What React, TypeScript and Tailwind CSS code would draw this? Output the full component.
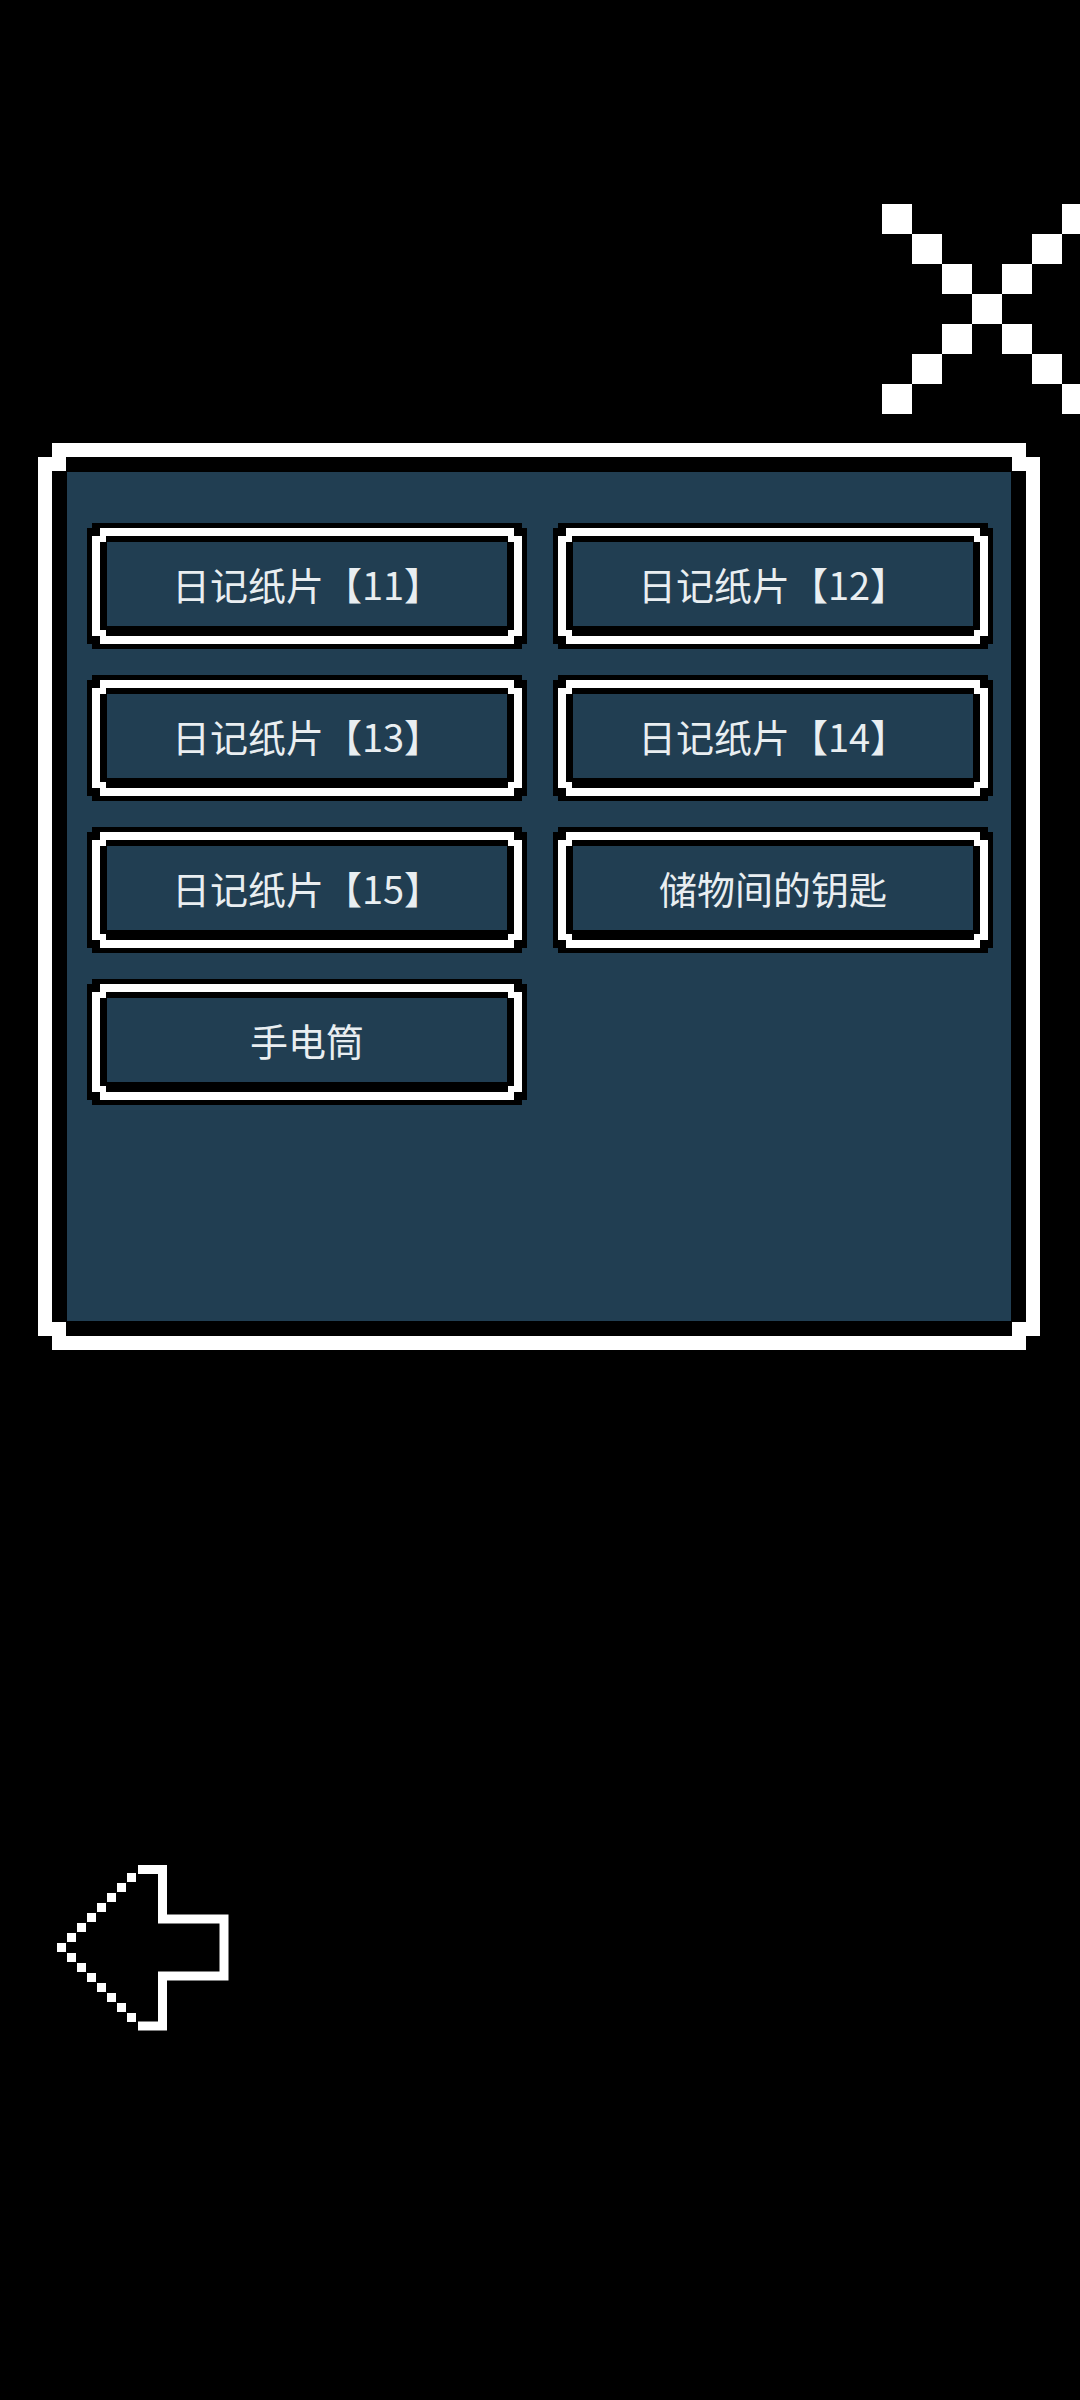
import React from 'react';

// stepped "pixel" corners, one per notch size
const notch14 =
  '[clip-path:polygon(14px_0,calc(100%_-_14px)_0,calc(100%_-_14px)_14px,100%_14px,100%_calc(100%_-_14px),calc(100%_-_14px)_calc(100%_-_14px),calc(100%_-_14px)_100%,14px_100%,14px_calc(100%_-_14px),0_calc(100%_-_14px),0_14px,14px_14px)]';
const notch5 =
  '[clip-path:polygon(5px_0,calc(100%_-_5px)_0,calc(100%_-_5px)_5px,100%_5px,100%_calc(100%_-_5px),calc(100%_-_5px)_calc(100%_-_5px),calc(100%_-_5px)_100%,5px_100%,5px_calc(100%_-_5px),0_calc(100%_-_5px),0_5px,5px_5px)]';
const notch8 =
  '[clip-path:polygon(8px_0,calc(100%_-_8px)_0,calc(100%_-_8px)_8px,100%_8px,100%_calc(100%_-_8px),calc(100%_-_8px)_calc(100%_-_8px),calc(100%_-_8px)_100%,8px_100%,8px_calc(100%_-_8px),0_calc(100%_-_8px),0_8px,8px_8px)]';
const notch6 =
  '[clip-path:polygon(6px_0,calc(100%_-_6px)_0,calc(100%_-_6px)_6px,100%_6px,100%_calc(100%_-_6px),calc(100%_-_6px)_calc(100%_-_6px),calc(100%_-_6px)_100%,6px_100%,6px_calc(100%_-_6px),0_calc(100%_-_6px),0_6px,6px_6px)]';

const items = ['日记纸片【11】', '日记纸片【12】', '日记纸片【13】', '日记纸片【14】', '日记纸片【15】', '储物间的钥匙', '手电筒'];

function CloseIcon() {
  const cells: [number, number][] = [];
  for (let i = 0; i < 7; i++) {
    cells.push([i, i]);
    if (i !== 3) cells.push([6 - i, i]);
  }
  return (
    <svg width="198" height="210" viewBox="0 0 198 210" className="block">
      {cells.map(([c, r]) => (
        <rect key={`${c}-${r}`} x={c * 30} y={r * 30} width="30" height="30" fill="#fff" />
      ))}
    </svg>
  );
}

function BackArrow() {
  const dots: [number, number][] = [];
  for (let i = 0; i < 8; i++) {
    dots.push([17 + i * 10, 103 - i * 10]);
    if (i > 0) dots.push([17 + i * 10, 103 + i * 10]);
  }
  return (
    <svg width="200" height="200" viewBox="0 0 200 200" className="block">
      {dots.map(([x, y]) => (
        <rect key={`${x}-${y}`} x={x} y={y} width="9" height="9" fill="#fff" />
      ))}
      <path
        d="M98 29.5 H122.5 V79 H184 V136 H122.5 V186 H98"
        fill="none"
        stroke="#fff"
        strokeWidth="9"
        strokeLinejoin="miter"
      />
    </svg>
  );
}

function ItemButton({ label }: { label: string }) {
  return (
    <button className={`block w-[440px] h-[126px] bg-black p-[5px] ${notch5}`}>
      <div className={`h-full bg-white p-[8px] ${notch8}`}>
        <div className={`h-full bg-black px-[7px] pt-[6px] pb-[10px] ${notch6}`}>
          <div className="h-full bg-[#213e52] flex items-center justify-center">
            <span className="text-[38px] leading-none text-[#e9eef1] font-['Noto_Sans_CJK_SC',sans-serif]">{label}</span>
          </div>
        </div>
      </div>
    </button>
  );
}

export default function App() {
  return (
    <div className="w-[1080px] h-[2400px] bg-black overflow-hidden">
      {/* close */}
      <div className="flex justify-end pt-[204px]">
        <CloseIcon />
      </div>

      {/* inventory panel */}
      <div className={`mt-[29px] ml-[38px] w-[1002px] h-[907px] bg-white p-[14px] ${notch14}`}>
        <div className={`h-full bg-black p-[15px] ${notch14}`}>
          <div className="h-full bg-[#213e52] pt-[51px] pl-[20px]">
            <div className="grid grid-cols-[440px_440px] gap-x-[26px] gap-y-[26px]">
              {items.map((it) => (
                <ItemButton key={it} label={it} />
              ))}
            </div>
          </div>
        </div>
      </div>

      {/* back */}
      <div className="mt-[490px] ml-[40px]">
        <BackArrow />
      </div>
    </div>
  );
}
